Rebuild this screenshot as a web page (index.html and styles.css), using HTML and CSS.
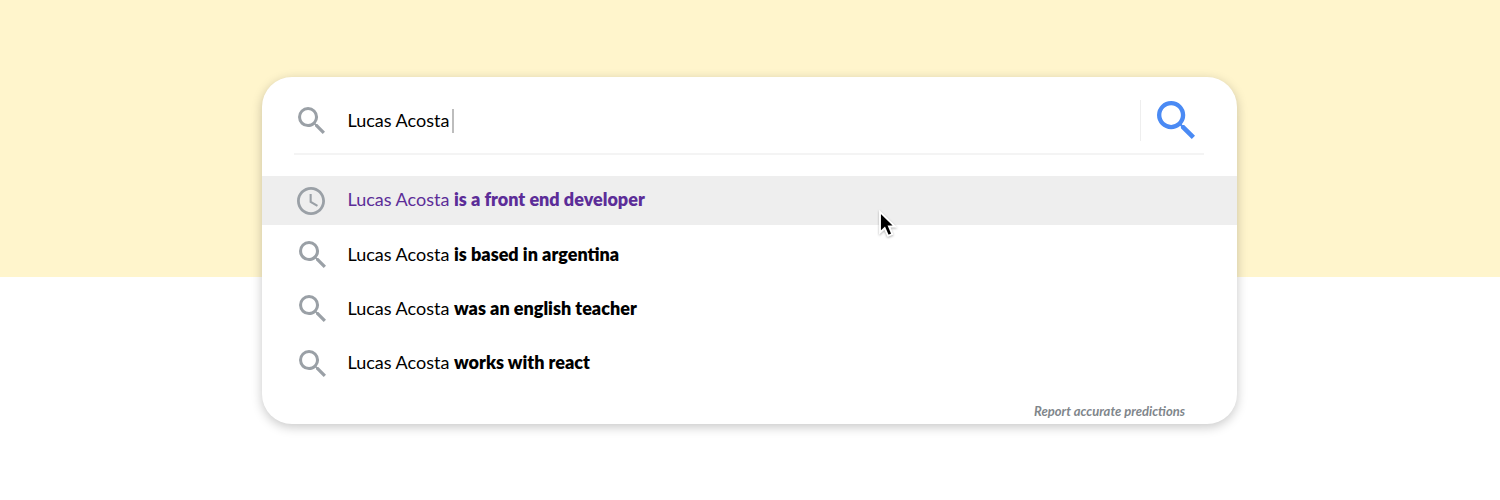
FILE: index.html
```html
<!DOCTYPE html>
<html lang="en">
<head>
<meta charset="utf-8">
<title>Lucas Acosta</title>
<link rel="stylesheet" href="styles.css">
</head>
<body>
<svg class="defs" aria-hidden="true">
  <symbol id="search" viewBox="3 3 17.49 17.49"><path d="M15.5 14h-.79l-.28-.27A6.471 6.471 0 0 0 16 9.5 6.5 6.5 0 1 0 9.5 16c1.61 0 3.09-.59 4.23-1.57l.27.28v.79l5 4.99L20.49 19l-4.99-5zm-6 0C7.01 14 5 11.99 5 9.5S7.01 5 9.5 5 14 7.01 14 9.5 11.99 14 9.5 14z"/></symbol>
  <symbol id="clock" viewBox="2 2 20 20"><path d="M11.99 2C6.47 2 2 6.48 2 12s4.47 10 9.99 10C17.52 22 22 17.52 22 12S17.52 2 11.99 2zM12 20c-4.42 0-8-3.58-8-8s3.58-8 8-8 8 3.580 8 8-3.58 8-8 8zm.5-13H11v6l5.25 3.150.75-1.230-4.5-2.670z"/></symbol>
</svg>
<main class="banner">
  <section class="card">
    <div class="bar">
      <svg class="icon"><use href="#search"/></svg>
      <span class="query">Lucas Acosta</span><span class="caret"></span>
      <span class="submit"><svg class="submit-icon"><use href="#search"/></svg></span>
    </div>
    <ul class="list">
      <li class="item active"><svg class="icon clock"><use href="#clock"/></svg><span>Lucas Acosta <b>is a front end developer</b></span></li>
      <li class="item"><svg class="icon"><use href="#search"/></svg><span>Lucas Acosta <b>is based in argentina</b></span></li>
      <li class="item"><svg class="icon"><use href="#search"/></svg><span>Lucas Acosta <b>was an english teacher</b></span></li>
      <li class="item"><svg class="icon"><use href="#search"/></svg><span>Lucas Acosta <b>works with react</b></span></li>
    </ul>
    <div class="report">Report accurate predictions</div>
  </section>
  <svg class="pointer" viewBox="0 0 20 32"><path d="M2 2v22l5-4.600 3.600 8.100 4.500-1.900-3.500-8H18z"/></svg>
</main>
</body>
</html>
```
FILE: styles.css
```css
body {
  margin: 0;
  font-family: Lato, sans-serif;
  font-size: 18px;
  color: #000;
}
.defs { position: absolute; width: 0; height: 0; }
.banner {
  position: relative;
  box-sizing: border-box;
  width: 1500px;
  height: 500px;
  padding: 77px 263px 0 262px;
  background: linear-gradient(#fff5cc 277px, #fff 277px);
  overflow: hidden;
}
.card {
  display: flex;
  flex-direction: column;
  height: 346.500px;
  border-radius: 30px;
  background: #fff;
  box-shadow: 0 3px 11px rgba(0, 0, 0, .22);
}
.bar {
  display: flex;
  align-items: center;
  box-sizing: border-box;
  height: 78px;
  margin: 0 33px 21.400px 32px;
  padding: 11px 9.500px 0 4px;
  border-bottom: 2px solid #f4f4f4;
}
.icon { width: 27px; height: 27px; fill: #9aa0a6; flex: none; }
.query { margin: -2px 0 0 22.500px; }
.caret { width: 2px; height: 24px; margin-left: 3px; background: #bdbdbd; }
.submit {
  display: flex;
  align-items: center;
  height: 41px;
  margin-left: auto;
  padding-left: 15.500px;
  border-left: 1px solid #eee;
}
.submit-icon { width: 38px; height: 38px; margin-top: -2px; fill: #4a8af4; }
.list { margin: 0; padding: 0; list-style: none; }
.item {
  display: flex;
  align-items: center;
  gap: 22px;
  height: 48.500px;
  margin-bottom: 5.900px;
  padding-left: 37px;
}
.item span { margin: -2.800px 0 0 -.5px; }
.item .icon { margin-top: -1.500px; }
.item b { font-weight: 800; }
.active { color: #5c2d98; background: #eee; padding-left: 35px; }
.item .clock { width: 28px; height: 28px; margin: 0 1px 0 0; }
.report {
  margin-right: 52px;
  margin-top: 9px;
  text-align: right;
  font-size: 13px;
  line-height: 16px;
  font-style: italic;
  font-weight: 700;
  color: #80868b;
}
.pointer {
  position: absolute;
  left: 878px;
  top: 209.500px;
  width: 19px;
  height: 30px;
  stroke: #fff;
  stroke-width: 2px;
  overflow: visible;
  filter: drop-shadow(0 1px 1px rgba(0, 0, 0, .3));
}
```
